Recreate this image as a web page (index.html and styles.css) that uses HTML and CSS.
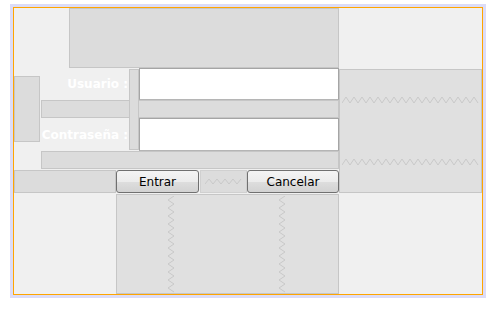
FILE: index.html
```html
<!DOCTYPE html>
<html lang="es">
<head>
<meta charset="UTF-8">
<title>Login</title>
<link rel="stylesheet" href="styles.css">
</head>
<body>

<div class="frame">
  <div class="form">
    <div class="box top-block"></div>
    <div class="box left-block"></div>
    <label class="label user-label">Usuario :</label>
    <input class="field user-field" type="text">
    <div class="box hbar hbar1"></div>
    <label class="label pass-label">Contraseña :</label>
    <input class="field pass-field" type="password">
    <div class="box hbar hbar2"></div>
    <div class="box vbar"></div>

    <!-- espaciador derecho -->
    <div class="box spacer right-block">
      <svg class="zig-h zig1" width="138" height="8"><polyline points="0,7 4,1 8,7 12,1 16,7 20,1 24,7 28,1 32,7 36,1 40,7 44,1 48,7 52,1 56,7 60,1 64,7 68,1 72,7 76,1 80,7 84,1 88,7 92,1 96,7 100,1 104,7 108,1 112,7 116,1 120,7 124,1 128,7 132,1 136,7"/></svg>
      <svg class="zig-h zig2" width="138" height="8"><polyline points="0,7 4,1 8,7 12,1 16,7 20,1 24,7 28,1 32,7 36,1 40,7 44,1 48,7 52,1 56,7 60,1 64,7 68,1 72,7 76,1 80,7 84,1 88,7 92,1 96,7 100,1 104,7 108,1 112,7 116,1 120,7 124,1 128,7 132,1 136,7"/></svg>
    </div>

    <div class="box bottom-left"></div>
    <button class="btn entrar">Entrar</button>
    <div class="box spacer mid-spacer">
      <svg class="zig-h" width="38" height="7"><polyline points="0,6 4,1 8,6 12,1 16,6 20,1 24,6 28,1 32,6 36,1"/></svg>
    </div>
    <button class="btn cancelar">Cancelar</button>

    <!-- espaciador inferior -->
    <div class="box spacer bottom-block">
      <svg class="zig-v" width="8" height="97"><polyline points="7,0 1,4 7,8 1,12 7,16 1,20 7,24 1,28 7,32 1,36 7,40 1,44 7,48 1,52 7,56 1,60 7,64 1,68 7,72 1,76 7,80 1,84 7,88 1,92 7,96"/></svg>
      <svg class="zig-v" width="8" height="97"><polyline points="7,0 1,4 7,8 1,12 7,16 1,20 7,24 1,28 7,32 1,36 7,40 1,44 7,48 1,52 7,56 1,60 7,64 1,68 7,72 1,76 7,80 1,84 7,88 1,92 7,96"/></svg>
    </div>
  </div>
</div>

</body>
</html>
```

FILE: styles.css
```css
body { margin: 0; padding: 4px 0 0 10px; background: #ffffff; font-family: "DejaVu Sans", Verdana, sans-serif; }

.frame { width: 476px; height: 294px; padding: 3px; box-sizing: border-box; background: #dcdcf7; }

.form {
  height: 288px;
  box-sizing: border-box;
  border: 1px solid #ffa500;
  background: #f0f0f0;
  display: grid;
  grid-template-columns: 26px 1px 28px 47px 13px 10px 61px 47px 92px 143px;
  grid-template-rows: 60px 1px 7px 24px 18px 24px 8px 1px 18px 1px 23px 1px 100px;
}

.box { box-sizing: border-box; border: 1px solid #c6c6c6; background: #dcdcdc; }
.spacer { background: #e0e0e0; }

.top-block { grid-column: 4 / 10; grid-row: 1 / 2; }
.left-block { grid-column: 1 / 2; grid-row: 4 / 7; }
.hbar1 { grid-column: 3 / 10; grid-row: 5 / 6; }
.hbar2 { grid-column: 3 / 10; grid-row: 9 / 10; }
.vbar { grid-column: 6 / 7; grid-row: 3 / 8; position: relative; z-index: 1; }

.label {
  display: flex; align-items: center; justify-content: flex-end;
  padding-right: 1px;
  color: #ffffff; font-weight: bold; font-size: 12px;
  white-space: nowrap;
}
.user-label { grid-column: 3 / 6; grid-row: 2 / 5; }
.pass-label { grid-column: 3 / 6; grid-row: 6 / 9; }

.field {
  margin: 0; padding: 0 3px;
  box-sizing: border-box;
  width: 100%; height: 100%;
  border: 1px solid #a5a5a5;
  border-bottom-color: #b5b5b5;
  background: #ffffff;
  font-family: inherit; font-size: 12px;
}
.user-field { grid-column: 7 / 10; grid-row: 2 / 5; }
.pass-field { grid-column: 7 / 10; grid-row: 6 / 9; }

.right-block { grid-column: 10 / 11; grid-row: 3 / 12; display: flex; flex-direction: column; align-items: center; }
.zig1 { margin-top: 26px; }
.zig2 { margin-top: 54px; }

.zig-h, .zig-v { display: block; }
.zig-h polyline, .zig-v polyline { fill: none; stroke: #c9c9c9; stroke-width: 1; }

.bottom-left { grid-column: 1 / 5; grid-row: 11 / 12; }
.mid-spacer { grid-column: 8 / 9; grid-row: 11 / 12; display: flex; align-items: center; justify-content: center; background: #dcdcdc; border-color: #d0d0d0; }

.btn {
  margin: 0; padding: 0;
  box-sizing: border-box;
  border: 1px solid #707070;
  border-radius: 3px;
  background: linear-gradient(#f4f4f4 0%, #ececec 50%, #dedede 51%, #d2d2d2 100%);
  color: #000000;
  font-family: inherit; font-size: 12px;
}
.entrar { grid-column: 5 / 8; grid-row: 11 / 12; margin-right: 1px; }
.cancelar { grid-column: 9 / 10; grid-row: 11 / 12; }

.bottom-block { grid-column: 5 / 10; grid-row: 13 / 14; display: flex; padding-top: 1px; }
.bottom-block .zig-v:first-child { margin-left: 50px; }
.bottom-block .zig-v:last-child { margin-left: 103px; }
```
